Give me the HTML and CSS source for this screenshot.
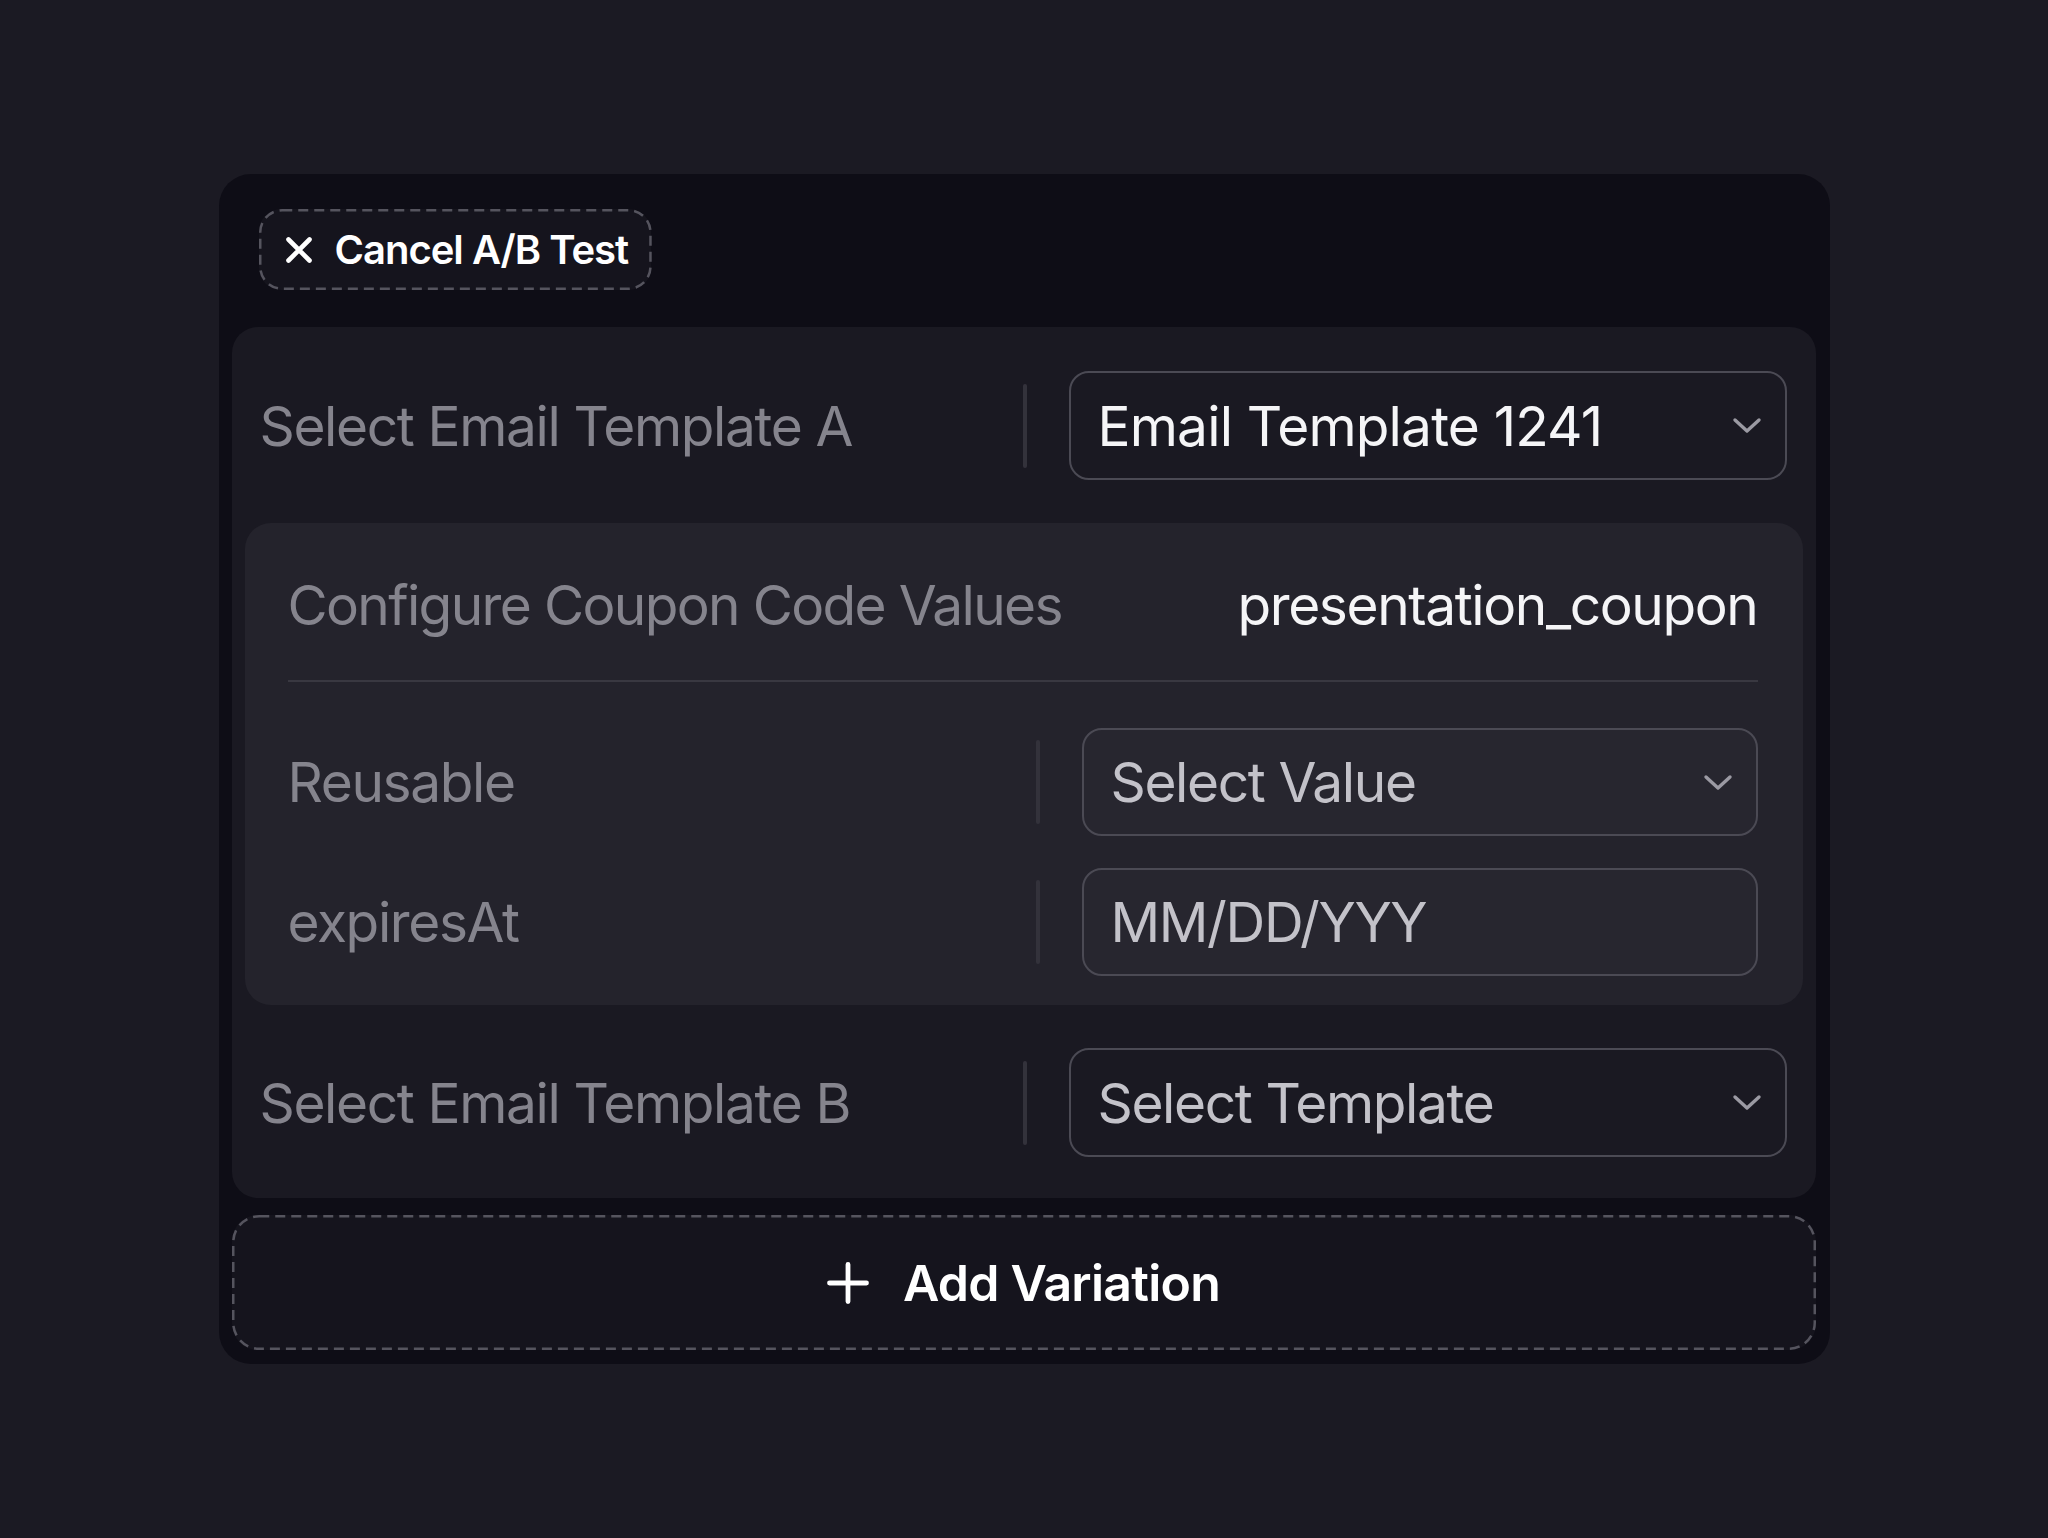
FILE: index.html
```html
<!DOCTYPE html>
<html lang="en">
<head>
<meta charset="utf-8">
<title>A/B Test</title>
<link rel="stylesheet" href="styles.css">
</head>
<body>
<div class="card">
  <div class="card-header">
    <button class="cancel-btn" type="button">
      <svg class="dash" aria-hidden="true"><rect class="dash-rect cancel-rect"/></svg>
      <svg class="icon-x" width="28" height="28" viewBox="0 0 28 28"><path d="M3.5 3.5 L24.5 24.5 M24.5 3.5 L3.5 24.5" stroke="#ffffff" stroke-width="4.6" stroke-linecap="round" fill="none"/></svg>
      <span>Cancel A/B Test</span>
    </button>
  </div>

  <div class="panel">
    <div class="row">
      <div class="label">Select Email Template A</div>
      <div class="field">
        <div class="vdiv"></div>
        <div class="select">
          <span class="value">Email Template 1241</span>
          <svg class="chev" width="30" height="17" viewBox="0 0 30 17"><path d="M3 3 L15 14 L27 3" stroke="#9b9aa3" stroke-width="3.4" stroke-linecap="round" stroke-linejoin="round" fill="none"/></svg>
        </div>
      </div>
    </div>

    <div class="coupon">
      <div class="coupon-head">
        <span class="label">Configure Coupon Code Values</span>
        <span class="value">presentation_coupon</span>
      </div>
      <div class="coupon-rows">
        <div class="row crow">
          <div class="label">Reusable</div>
          <div class="field">
            <div class="vdiv"></div>
            <div class="select">
              <span class="placeholder">Select Value</span>
              <svg class="chev" width="30" height="17" viewBox="0 0 30 17"><path d="M3 3 L15 14 L27 3" stroke="#9b9aa3" stroke-width="3.4" stroke-linecap="round" stroke-linejoin="round" fill="none"/></svg>
            </div>
          </div>
        </div>
        <div class="row crow">
          <div class="label">expiresAt</div>
          <div class="field">
            <div class="vdiv"></div>
            <div class="select">
              <span class="placeholder">MM/DD/YYY</span>
            </div>
          </div>
        </div>
      </div>
    </div>

    <div class="row">
      <div class="label">Select Email Template B</div>
      <div class="field">
        <div class="vdiv"></div>
        <div class="select">
          <span class="placeholder">Select Template</span>
          <svg class="chev" width="30" height="17" viewBox="0 0 30 17"><path d="M3 3 L15 14 L27 3" stroke="#9b9aa3" stroke-width="3.4" stroke-linecap="round" stroke-linejoin="round" fill="none"/></svg>
        </div>
      </div>
    </div>
  </div>

  <button class="add-btn" type="button">
    <svg class="dash" aria-hidden="true"><rect class="dash-rect add-rect"/></svg>
    <svg class="icon-plus" width="42" height="42" viewBox="0 0 42 42"><path d="M21 2.5 V39.5 M2.5 21 H39.5" stroke="#ffffff" stroke-width="4.8" stroke-linecap="round" fill="none"/></svg>
    <span>Add Variation</span>
  </button>
</div>
</body>
</html>
```
FILE: styles.css
```css
* { box-sizing: border-box; }

html, body {
  margin: 0;
  height: 100%;
}

body {
  background: #1b1a23;
  font-family: Inter, "Noto Sans", "Liberation Sans", sans-serif;
  line-height: 1.2;
  display: flex;
  align-items: center;
  justify-content: center;
}

.card {
  width: 1611px;
  background: #0e0d16;
  border-radius: 32px;
  padding: 35px 14px 14px 13px;
  display: flex;
  flex-direction: column;
}

.card-header {
  padding-left: 27px;
  margin-bottom: 37px;
}

/* dashed outline drawn as an overlay so dash length matches */
.dash {
  position: absolute;
  inset: 0;
  width: 100%;
  height: 100%;
  pointer-events: none;
  overflow: visible;
}

.dash-rect {
  x: 1.25px;
  y: 1.25px;
  width: calc(100% - 2.5px);
  height: calc(100% - 2.5px);
  fill: none;
  stroke: #55545e;
  stroke-width: 2.5px;
  stroke-dasharray: 10 6;
}

.cancel-rect { rx: 22px; ry: 22px; }
.add-rect { rx: 26px; ry: 26px; }

.cancel-btn {
  position: relative;
  display: inline-flex;
  align-items: center;
  gap: 22px;
  height: 81px;
  padding: 0 23px 0 26px;
  background: #15141d;
  border: none;
  border-radius: 22px;
  color: #ffffff;
  font-family: inherit;
  font-size: 40px;
  font-weight: 600;
  letter-spacing: -0.025em;
}

.icon-x { flex: none; }

.panel {
  background: #1a1922;
  border-radius: 26px;
  padding: 44px 29px 41px 28px;
  display: flex;
  flex-direction: column;
  gap: 43px;
}

.row {
  display: grid;
  grid-template-columns: 1fr 764px;
  align-items: center;
}

.label {
  font-size: 55px;
  color: #85848d;
  letter-spacing: -0.025em;
  white-space: nowrap;
}

.field {
  display: flex;
  align-items: center;
  gap: 42px;
}

.vdiv {
  width: 4px;
  height: 84px;
  border-radius: 2px;
  background: #33323b;
  flex: none;
}

.select {
  flex: 1;
  height: 109px;
  border: 2.5px solid #4b4a54;
  border-radius: 20px;
  padding: 0 23px 0 27px;
  display: flex;
  align-items: center;
  justify-content: space-between;
  font-size: 55px;
  letter-spacing: -0.025em;
}

.chev { flex: none; }

.value {
  color: #f5f5f7;
}

.select .value {
  letter-spacing: -0.015em;
}

.placeholder {
  color: #c3c2c9;
}

.coupon {
  margin: 0 -16px 0 -15px;
  background: #24232c;
  border-radius: 26px;
  padding: 49px 45px 29px 43px;
}

.coupon .select {
  background: #27262f;
}

.coupon-head {
  display: flex;
  justify-content: space-between;
  align-items: center;
  font-size: 55px;
  letter-spacing: -0.025em;
  padding-bottom: 42px;
  border-bottom: 2px solid #393841;
}

.coupon-head .label {
  letter-spacing: -0.03em;
}

.coupon-rows {
  margin-top: 46px;
  display: flex;
  flex-direction: column;
  gap: 32px;
}

.crow {
  grid-template-columns: 1fr 722px;
}

.crow .select {
  height: 108px;
}

.add-btn {
  position: relative;
  margin-top: 17px;
  height: 135px;
  width: 100%;
  background: #15141d;
  border: none;
  border-radius: 26px;
  display: flex;
  align-items: center;
  justify-content: center;
  gap: 34px;
  color: #ffffff;
  font-family: inherit;
  font-size: 50px;
  font-weight: 600;
  letter-spacing: -0.015em;
  padding: 0;
}

.icon-plus { flex: none; }
```
